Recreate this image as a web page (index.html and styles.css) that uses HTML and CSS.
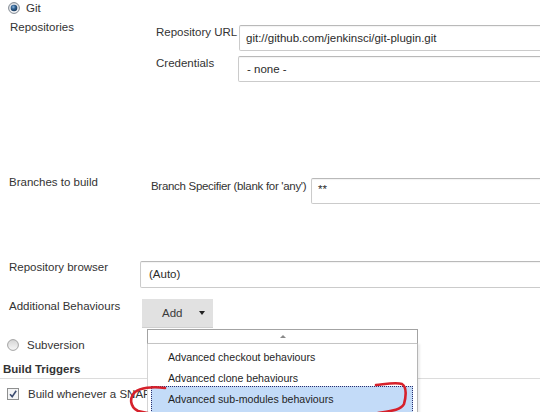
FILE: index.html
```html
<!DOCTYPE html>
<html>
<head>
<meta charset="utf-8">
<title>Source Code Management</title>
<link rel="stylesheet" href="styles.css">
</head>
<body>
<div class="page">
  <div class="scm-option git-option">
    <svg class="radio" width="12" height="12" viewBox="0 0 12 12">
      <defs>
        <radialGradient id="dotFill" cx="0.4" cy="0.35" r="0.7">
          <stop offset="0" stop-color="#8fb9e0"/>
          <stop offset="0.45" stop-color="#2f5f8f"/>
          <stop offset="1" stop-color="#173656"/>
        </radialGradient>
        <linearGradient id="ringFill" x1="0" y1="0" x2="0" y2="1">
          <stop offset="0" stop-color="#d9dde2"/>
          <stop offset="1" stop-color="#f7f8fa"/>
        </linearGradient>
      </defs>
      <circle cx="6" cy="6" r="5.4" fill="url(#ringFill)" stroke="#7f8790" stroke-width="1"/>
      <circle cx="6" cy="6" r="3.3" fill="url(#dotFill)"/>
    </svg>
    <span>Git</span>
  </div>

  <div class="section section-repos">
    <div class="section-label">Repositories</div>
    <div class="fields fields-repos">
      <div class="field-label">Repository URL</div>
      <div class="text-input url-input">git://github.com/jenkinsci/git-plugin.git</div>
      <div class="field-label">Credentials</div>
      <div class="text-input select-input cred-input">- none -</div>
    </div>
  </div>

  <div class="section section-branches">
    <div class="section-label">Branches to build</div>
    <div class="fields fields-branches">
      <div class="field-label spec-label">Branch Specifier (blank for 'any')</div>
      <div class="text-input spec-input">**</div>
    </div>
  </div>

  <div class="section section-browser">
    <div class="section-label">Repository browser</div>
    <div class="text-input select-input browser-input">(Auto)</div>
  </div>

  <div class="section section-behaviours">
    <div class="section-label">Additional Behaviours</div>
    <div class="add-wrap">
      <div class="add-button"><span>Add</span><i class="caret"></i></div>
      <div class="menu">
        <div class="menu-scroll"><i class="scroll-up"></i></div>
        <ul class="menu-list">
          <li class="menu-item">Advanced checkout behaviours</li>
          <li class="menu-item">Advanced clone behaviours</li>
          <li class="menu-item is-active">Advanced sub-modules behaviours</li>
        </ul>
      </div>
    </div>
  </div>

  <div class="scm-option svn-option">
    <svg class="radio" width="12" height="12" viewBox="0 0 12 12">
      <defs>
        <linearGradient id="offFill" x1="0" y1="0" x2="0" y2="1">
          <stop offset="0" stop-color="#d4d4d4"/>
          <stop offset="1" stop-color="#f8f8f8"/>
        </linearGradient>
      </defs>
      <circle cx="6" cy="6" r="5.4" fill="url(#offFill)" stroke="#a2a2a2" stroke-width="1"/>
    </svg>
    <span>Subversion</span>
  </div>

  <h3 class="section-title">Build Triggers</h3>

  <div class="check-row">
    <svg class="checkbox" width="12" height="12" viewBox="0 0 12 12">
      <rect x="0.5" y="0.5" width="11" height="11" fill="#f4f5f6" stroke="#8e8f8f"/>
      <path d="M3 6.2 L5.2 8.6 L9.2 2.8" fill="none" stroke="#3c4c70" stroke-width="1.6"/>
    </svg>
    <span class="check-text">Build whenever a SNAP</span>
  </div>

  <!-- red pen marks around the highlighted menu entry -->
  <svg class="pen-marks" width="540" height="412" viewBox="0 0 540 412">
    <path d="M165 388 C152 386 140 388 135 392 C129 398 130 407 138 411 L152 414" fill="none" stroke="#d6212b" stroke-width="2.6" stroke-linecap="round"/>
    <path d="M376 385 C386 384 396 382 402 384 C407 387 406 397 404 404 C401 410 391 411 378 413" fill="none" stroke="#d6212b" stroke-width="2.6" stroke-linecap="round"/>
  </svg>
</div>
</body>
</html>
```

FILE: styles.css
```css
* {
  box-sizing: border-box;
}

html,
body {
  margin: 0;
  padding: 0;
}

body {
  width: 540px;
  height: 412px;
  overflow: hidden;
  background: #fff;
  color: #333;
  font-family: "Liberation Sans", Arial, sans-serif;
  font-size: 11.5px;
  line-height: 14px;
}

.page {
  position: relative;
  height: 412px;
}

/* radio rows (Git / Subversion) */
.scm-option {
  display: flex;
  align-items: center;
  height: 16px;
}

.radio {
  display: block;
  flex: none;
}

.git-option {
  padding-left: 8px;
  gap: 6px;
}

.svn-option {
  padding-left: 7px;
  gap: 8px;
  margin-top: 9px;
}

/* label / content sections */
.section {
  display: grid;
  align-items: start;
}

.section-label {
  padding-left: 10px;
  white-space: nowrap;
}

.fields {
  display: grid;
  align-items: start;
  row-gap: 5px;
}

.field-label {
  white-space: nowrap;
}

.section-repos {
  grid-template-columns: 156px 1fr;
  margin-top: 4px;
}

.fields-repos {
  grid-template-columns: 83px 1fr;
  margin-top: 5px;
}

.section-branches {
  grid-template-columns: 151px 1fr;
  margin-top: 93px;
}

.section-branches .section-label {
  padding-left: 9px;
}

.fields-branches {
  grid-template-columns: 160px 1fr;
  margin-top: 3px;
}

.spec-label {
  padding-top: 1px;
  letter-spacing: -0.3px;
}

.section-browser {
  grid-template-columns: 140px 1fr;
  margin-top: 56px;
}

.section-browser .section-label,
.section-behaviours .section-label {
  padding-left: 9px;
}

.section-behaviours {
  grid-template-columns: 142px 1fr;
  margin-top: 11px;
}

/* text boxes run off the right edge of the page */
.text-input {
  height: 26px;
  margin-right: -6px;
  padding-left: 6px;
  border: 1px solid #cbcbcb;
  border-top-color: #b9b9b9;
  border-radius: 2px 0 0 2px;
  background: #fff;
  color: #2b2b2b;
  line-height: 24px;
  white-space: nowrap;
  box-shadow: inset 0 1px 1px rgba(0, 0, 0, 0.05);
}

.select-input {
  padding-left: 8px;
}

.cred-input {
  margin-left: -1px;
}

.browser-input {
  height: 27px;
  margin-top: 1px;
  line-height: 25px;
}

.spec-input {
  padding-left: 6px;
  line-height: 20px;
}

/* Add dropdown button */
.add-wrap {
  position: relative;
  width: 71px;
}

.add-button {
  display: flex;
  align-items: center;
  gap: 17px;
  height: 29px;
  padding-left: 20px;
  background: #e1e1e1;
  border-bottom: 1px solid #cfcfcf;
  color: #3a3a3a;
}

.caret {
  display: block;
  width: 0;
  height: 0;
  border-left: 3.5px solid transparent;
  border-right: 3.5px solid transparent;
  border-top: 4px solid #222;
}

.menu {
  position: absolute;
  left: 5px;
  top: 30px;
  width: 271px;
  z-index: 2;
}

.menu-scroll {
  display: flex;
  justify-content: center;
  align-items: center;
  height: 15px;
  border: 1px solid #a3a3a3;
  border-bottom-color: #c9c9c9;
  background: #fff;
}

.scroll-up {
  display: block;
  width: 0;
  height: 0;
  border-left: 3px solid transparent;
  border-right: 3px solid transparent;
  border-bottom: 3px solid #8a8a8a;
}

.menu-list {
  list-style: none;
  margin: 0;
  padding: 3px 0 6px;
  background: #fff;
  border-left: 1px solid #d4d4d4;
  border-right: 1px solid #b5b5b5;
  box-shadow: 2px 0 2px rgba(0, 0, 0, 0.08);
}

.menu-item {
  height: 21px;
  padding-left: 20px;
  color: #1f1f1f;
  font-size: 10.6px;
  line-height: 21px;
  white-space: nowrap;
}

.menu-item.is-active {
  height: 27px;
  margin: -3px 4px 0 3px;
  padding: 3px 0 0 16px;
  border: 1px dotted #2a2f6e;
  background: #c3dbf8;
  line-height: 18px;
}

/* Build Triggers */
.section-title {
  margin: 9px 0 0;
  padding: 0 0 2px 3px;
  border-bottom: 1px solid #dcdcdc;
  color: #333;
  font-size: 11.5px;
  font-weight: bold;
  line-height: 14px;
}

.check-row {
  display: flex;
  align-items: center;
  gap: 9px;
  height: 16px;
  margin-top: 7px;
  padding-left: 7px;
}

.check-text {
  white-space: nowrap;
}

.checkbox {
  display: block;
  flex: none;
}

.pen-marks {
  position: absolute;
  left: 0;
  top: 0;
  z-index: 3;
  pointer-events: none;
}
```
